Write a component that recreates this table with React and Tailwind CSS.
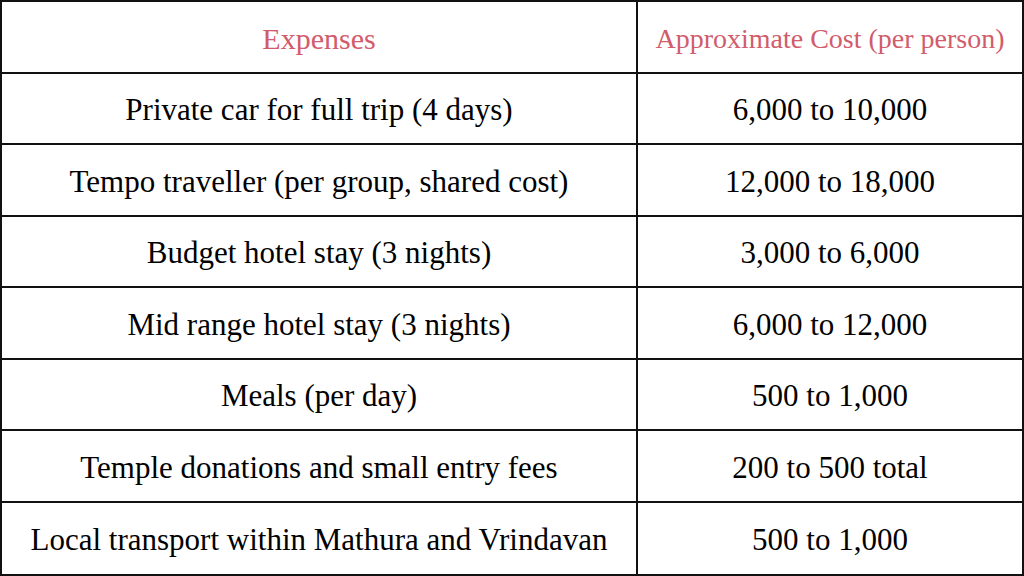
const rows = [
  ['Private car for full trip (4 days)', '6,000 to 10,000'],
  ['Tempo traveller (per group, shared cost)', '12,000 to 18,000'],
  ['Budget hotel stay (3 nights)', '3,000 to 6,000'],
  ['Mid range hotel stay (3 nights)', '6,000 to 12,000'],
  ['Meals (per day)', '500 to 1,000'],
  ['Temple donations and small entry fees', '200 to 500 total'],
  ['Local transport within Mathura and Vrindavan', '500 to 1,000'],
];

export default function App() {
  return (
    <div className="w-[1024px] h-[576px] bg-white font-['Liberation_Serif',serif] overflow-hidden">
      <div className="grid grid-cols-[636px_1fr] grid-rows-8 h-full border-2 border-[#111]">
        <div className="flex items-center justify-center border-r-2 border-b-2 border-[#111] text-[30px] text-[#d15c6b] pt-1">
          Expenses
        </div>
        <div className="flex items-center justify-center border-b-2 border-[#111] text-[28px] text-[#d15c6b] pt-1">
          Approximate Cost (per person)
        </div>
        {rows.map(([name, cost], i) => (
          <div key={name} className="contents">
            <div
              className={`flex items-center justify-center border-r-2 border-[#111] text-[31px] text-black pt-1 ${i < rows.length - 1 ? 'border-b-2' : ''}`}
            >
              {name}
            </div>
            <div
              className={`flex items-center justify-center border-[#111] text-[31px] text-black pt-1 ${i < rows.length - 1 ? 'border-b-2' : ''}`}
            >
              {cost}
            </div>
          </div>
        ))}
      </div>
    </div>
  );
}
